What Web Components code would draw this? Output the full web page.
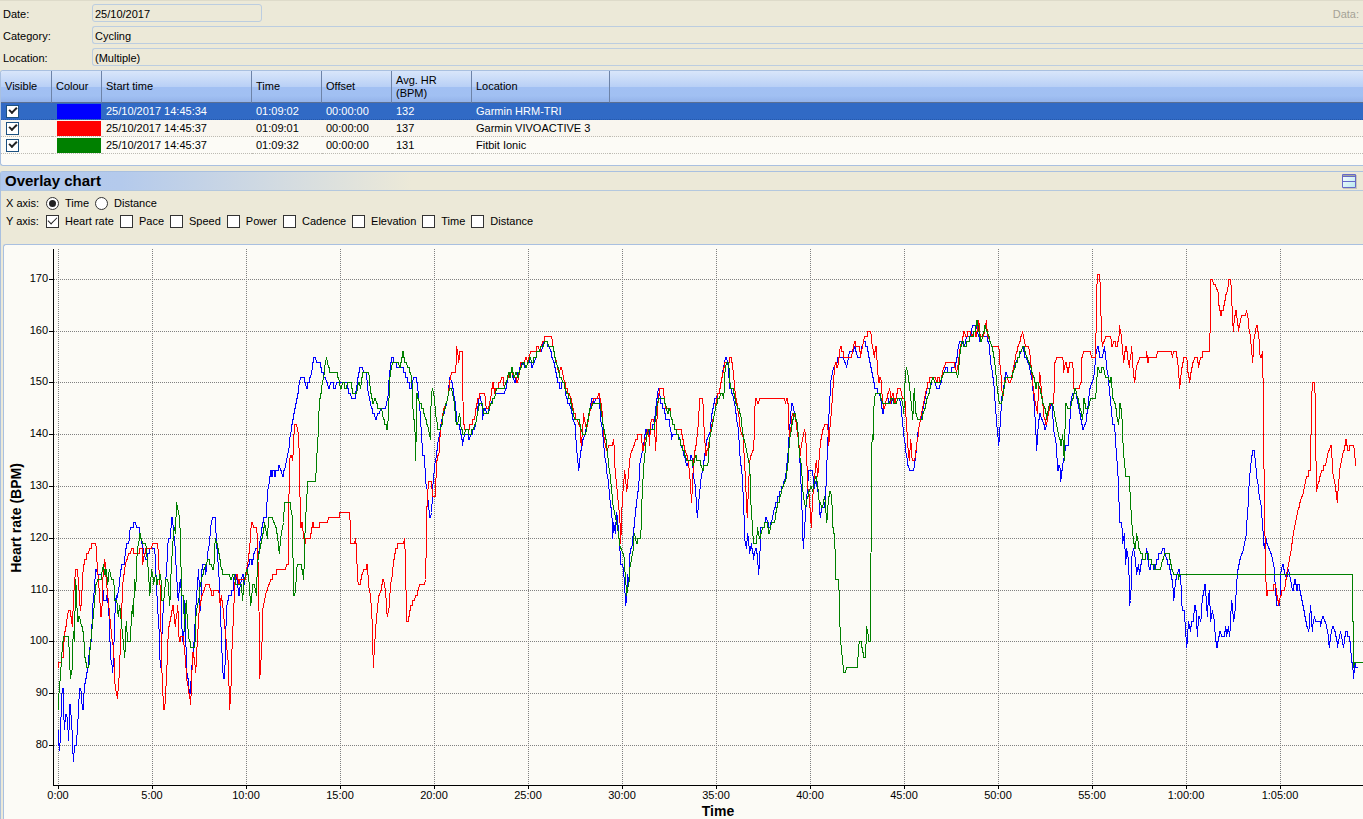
<!DOCTYPE html>
<html lang="en">
<head>
<meta charset="utf-8">
<title>Overlay chart</title>
<style>
html, body { margin: 0; height: 100%; }
body { background: #ece9d8; color: #000; font: 11px/14px "Liberation Sans", Arial, sans-serif; overflow: hidden; }
</style>
</head>
<body>
<activity-page></activity-page>

<script>
const define = (name, html, init) => customElements.define(name, class extends HTMLElement {
  connectedCallback() {
    if (this.shadowRoot) return;
    const t = document.createElement('template');
    t.innerHTML = html;
    this.attachShadow({ mode: 'open' }).append(t.content.cloneNode(true));
    if (init) init.call(this, this.shadowRoot);
  }
});

/* Labelled read-only field */
define('detail-field', `
<style>
:host { display: flex; align-items: center; height: 18px; padding-left: 3px; }
label { width: 89px; flex: none; padding-top: 2px; }
input { box-sizing: border-box; height: 18px; min-width: 0; flex: 1; margin: 0; padding: 2px 2px 0; border: 1px solid #bccde0; border-right: 0; border-radius: 3px 0 0 3px; background: transparent; font: inherit; color: inherit; outline: 0; }
:host([short]) input { flex: 0 0 170px; border-right: 1px solid #bccde0; border-radius: 3px; }
slot { display: block; margin-left: auto; padding-top: 2px; color: #a5a296; }
</style>
<label for="f"></label><input id="f" readonly><slot></slot>`, function (r) {
  r.querySelector('label').textContent = this.getAttribute('label');
  r.querySelector('input').value = this.getAttribute('value');
});

/* Radio button or tick box with its caption */
define('axis-option', `
<style>
:host { display: block; }
label { display: flex; align-items: center; gap: 6px; }
input { appearance: none; box-sizing: border-box; width: 13px; height: 13px; margin: 0; border: 1px solid #333; background: #fff; position: relative; flex: none; }
input[type=radio] { border-radius: 50%; display: grid; place-items: center; }
input[type=radio]:checked::before { content: ""; width: 7px; height: 7px; border-radius: 50%; background: #222; }
input[type=checkbox]:checked::before { content: ""; position: absolute; left: 1px; top: 1px; width: 8px; height: 4px; border: solid #222; border-width: 0 0 1px 1px; transform: rotate(-45deg); }
</style>
<label><input><slot></slot></label>`, function (r) {
  const i = r.querySelector('input');
  i.type = this.getAttribute('type') || 'checkbox';
  i.checked = this.hasAttribute('checked');
});

define('activity-table', `
<style>
:host { display: block; border: 1px solid #a9c0e0; border-right: 0; border-radius: 3px 0 0 3px; background: #fcfbf6; padding-bottom: 11px; overflow: hidden; }
table { width: 100%; border-collapse: separate; border-spacing: 0; table-layout: fixed; }
th, td { box-sizing: border-box; padding: 0 4px; text-align: left; font-weight: normal; white-space: nowrap; }
th { height: 32px; line-height: 13px; border-right: 1px solid #6d83a8; border-bottom: 1px solid #5b6f92; background: linear-gradient(#d9e6fa, #b9d0f6 50%, #a2c0f3 51%, #a1c0f2 80%, #94b3ea); }
th:last-child { border-right: 0; }
td { height: 17px; line-height: 16px; border-bottom: 1px dotted #bdbbb3; }
td:first-child { padding-left: 5px; }
tr.first td { background: #316ac5; color: #fff; border-bottom-color: #2458ac; }
tr.second td { background: #f9f6ef; }
i { display: block; height: 15px; margin: 0 -3px 0 1px; }
input { appearance: none; box-sizing: border-box; display: block; width: 13px; height: 13px; margin: 0; border: 1px solid #1c5180; background: #fff; position: relative; }
input:checked::before { content: ""; position: absolute; left: 2px; top: 1px; width: 6px; height: 3px; border: solid #222; border-width: 0 0 2px 2px; transform: rotate(-45deg); }
</style>
<table>
<colgroup><col style="width:51px"><col style="width:50px"><col style="width:150px"><col style="width:70px"><col style="width:70px"><col style="width:80px"><col style="width:138px"><col></colgroup>
<thead><tr><th>Visible</th><th>Colour</th><th>Start time</th><th>Time</th><th>Offset</th><th>Avg. HR<br>(BPM)</th><th>Location</th><th></th></tr></thead>
<tbody></tbody>
</table>`, r => {
  const rows = [
    ['first', '#00f', '25/10/2017 14:45:34', '01:09:02', '132', 'Garmin HRM-TRI'],
    ['second', '#f00', '25/10/2017 14:45:37', '01:09:01', '137', 'Garmin VIVOACTIVE 3'],
    ['third', '#008000', '25/10/2017 14:45:37', '01:09:32', '131', 'Fitbit Ionic']];
  r.querySelector('tbody').innerHTML = rows.map(([c, col, s, t, hr, l]) =>
    `<tr class="${c}"><td><input type="checkbox" checked aria-label="Show ${l}"></td><td><i style="background:${col}"></i></td><td>${s}</td><td>${t}</td><td>00:00:00</td><td>${hr}</td><td>${l}</td><td></td></tr>`).join('');
});

/* Heart rate traces: "x,bpm" pairs, 94 x units to five minutes */
const BLUE = `0,83 1,79 2,81 3,87 4,91 5,91 6,83 7.5,86 8.5,86 10.5,81 11.5,88 12,88 14,82 15,77 16.5,80 18,80 19.5,84 21,90 22,91 23,90 24,87 25,87 26,91 28,93 30,95 31,98 33,100 34.5,107 36,110 37.5,114 38.5,114 39,113 42.5,113 44,112 45.5,108 48,108 49,109 50.5,106 51.5,101 52.5,97 54.5,94 55.5,98 56.5,105 58,109 58.5,108 60.5,110 62,113 64,115 66,115 67,117 68.5,119 70.5,119 72,122 75,122 75.5,123 77.5,123 78,122 81,122 81.5,120 83,120 84.5,118 87.5,116 88.5,116 92,118 96.5,118 97.5,114 99.5,106 100.5,104 102,95 103,97 104,103 106,109 107.5,112 109,116 110,120 112,120 113.5,124 114,124 115.5,121 117,118 118.5,112 120,108 122,112 123,110 124,100 125.5,100 126.5,108 127.5,100 129,93 130.5,93 131,89 132,90 133.5,95 134.5,97 135.5,99 137.5,106 139.5,112 140.5,114 141.5,106 142.5,106 143.5,114 145,115 147,115 147.5,113 149,116 151,119 153,123 155,124 157,124 158,120 159.5,116 161,112 162,107 163.5,99 165,93 166.5,93 167.5,102 169,108 172,109 175,110 176,113 179,112 180.5,109 181,109 183,112 185,113 186,111 187,112 189,114 192,116 194,115 196,117 198,118 200.5,117 201,118 203,121 205,123 206,124 208,124 209,128 211,131 212.5,133 214,132 215,133 217,132 218,133 220,133 221,134 222,133 225,132 226,133 228.5,135 231,138 233,141 235,143 237.5,146 240,148 242,151 245.5,151 246.5,150 248.5,149 250,150 252.5,151 254,153 256,155 257.5,155 258,154 261.5,154 263.5,152 266.5,151 268.5,150 271,149 273,150 277,149 279,150 289,150 290.5,148 294.5,147 297,147 299,150 300.5,152 302.5,153 304,153 305.5,152 308,152 310,148 313,145 315.5,144 318,143 320,144 323.5,145 327.5,145 329.5,147 331,151 332.5,154 334.5,155 336,154 340,153 344,153 346.5,152 350,150 352.5,149 355.5,151 358,151 359.5,149 361.5,145 363,141 364.5,136 366,136 367.5,131 369.5,128 371,124.5 372,124 373.5,125 374.5,130 376.5,134 379.5,138 382,141 384,143 387,145 389.5,147 391.5,151 393.5,150 395.5,148 397.5,145 398.5,142 400.5,142 402.5,140 404.5,138 406.5,140 409.5,140 411,139 412.5,140 416,141 418.5,143 420,146 421.5,148 424,145 424.5,143 426,145 429.5,144 432,146 435.5,147 438,148 445.5,148 448,149 449.5,151 453.5,152 456.5,150 458.5,151 460.5,152 462,153 463.5,154 468,153 470.5,155 474,153 476,154 479,156 483,156 485.5,158 488,158 490.5,157 492.5,156 495.5,154 497.5,152 499.5,150 502.5,149 504.5,150 506,150 508,147 510.5,146 512.5,145 514.5,143 517,142 518,138 519.5,135 520.5,133 522,136 524.5,139 527,140 529.5,143 532,145 534,147 536,146 538,147 541,147 542.5,143 544.5,140 546.5,136 548.5,133 550.5,130 552,127 553.5,125 554.5,120 555.5,123 557,121 558.5,125 559.5,123 561.5,118 562.5,115 564.5,115 566,112 567.5,107 568.5,109 569.5,113 570.5,111 571.5,117 573.5,118 574.5,120 576.5,123 577,125 578.5,127 580.5,130 581.5,134 583.5,136 585.5,138 587.5,141 590,140 592.5,141 596,142 597.5,145 599.5,148 600.5,149 602.5,146 605.5,145 607.5,143 611,143 613.5,139 614.5,140 620,140 623,138 626,136 628.5,134 631.5,135 633.5,136 635.5,132 637,130 639,124 640.5,127 642.5,131 644.5,133 646.5,136 648.5,139 651.5,140 653,143 655.5,146 657,147 661,148 663,150 664.5,152 666,154 667.5,155 669.5,154 671.5,149 674.5,148 677,145 678.5,143 680.5,140 682,135 684,132 685.5,126 686.5,120 688,118 689.5,121 691.5,117 693,119 695.5,116 697,118 699,117 700.5,113 701.5,116 702.5,122 705.5,122 708,124 711,122 713.5,123 716,126 720.5,128 724.5,130 727.5,132 729.5,136 731.5,141 732.5,144 733.5,146 735.5,145 737,143 738.5,143 740.5,138 742,134 743.5,127 745,118 746.5,122 748,127 749.5,130 750.5,133 754.5,133 755.5,129 757.5,131 760.5,128 762,124 763.5,126 766,126 767.5,128 768,132 769.5,138 770.5,143 771.5,147 773,151 775.5,153 778.5,154 780.5,155 785,155 788.5,153 791.5,156 795,156 796.5,157 799.5,155 802,155 803.5,157 806,158 808.5,157 812,154 814.5,151 817,149 821.5,148 824.5,144 826.5,145 828.5,147 832,146 835.5,147 841,147 843,145 845.5,140 847.5,137 849.5,134 851.5,133 855.5,133 857.5,136 859.5,140 862.5,143 866,146 868.5,149 872,149 874.5,151 878.5,149 881,149 882.5,150 885.5,152 888.5,153 890,152 897,153 899.5,156 901.5,158 903.5,158 906,157 908.5,159 912,159 914.5,161 918,161 920,159 922.5,158 925.5,159 927.5,159 930.5,158 932.5,154 935.5,150 937,146 938.5,142 940.5,138 942,142 943.5,147 945.5,149 947.5,152 949.5,151 953.5,151 957,154 961,155 964.5,157 967,155 970.5,154 972,152 974,150 976,146 977.5,141 978.5,137 980,142 982,144 985.5,142 987,141 988.5,142 991,145 993.5,146 995.5,141 998,138 999.5,133 1001.5,134 1002.5,131 1004.5,134 1006,136 1007.5,138 1010,138 1011.5,142 1012.5,146 1014.5,148 1017.5,148 1019.5,146 1022,144 1024.5,141 1027.5,142 1029.5,145 1031.5,149 1034.5,150 1036,152 1037.5,155 1039.5,157 1041.5,155 1044.5,155 1046,157 1048,154 1050.5,150 1052.5,146 1054.5,142 1056,142 1058,137 1060,131 1061.5,123 1063.5,123 1064.5,119 1066,121 1067.5,115 1068.5,118 1070.5,115 1071.5,107 1072.5,108 1073.5,116 1075.5,118 1077,116 1078.5,113 1080,115 1081.5,113 1083.5,116 1087,116 1088.5,118 1091,114 1093.5,115 1097,114 1098.5,116 1102,117 1105.5,118 1108.5,116 1112,114 1114.5,111 1115.5,108 1117.5,112 1120.5,114 1122.5,112 1124,106 1126,106 1127,103 1128.5,99 1130.5,104 1132,102 1133.5,104 1135,104 1136.5,107 1138,106 1139,101 1140.5,105 1142.5,104 1144.5,109 1147,111 1149,105 1151,110 1152.5,104 1154,106 1156,104 1157.5,100 1158.5,99 1160,100 1162,102 1163.5,101 1166,101 1167.5,103 1168.5,101 1170,103 1171.5,101 1172.5,105 1173.5,108 1175.5,104 1176.5,105 1178,110 1179.5,114 1182,116 1185.5,118 1187.5,120 1189.5,125 1191,131 1192.5,134 1194.5,137 1196,137 1198,133 1200.5,129 1203,126 1204.5,122 1206,118 1207.5,120 1210.5,118 1213,117 1215.5,115 1217,111 1218.5,107 1221.5,107 1222.5,113 1224.5,115 1226.5,113 1228.5,112 1230.5,114 1232,112 1234.5,110 1237,112 1238.5,110 1240.5,111 1242.5,109 1244.5,107 1246.5,105 1248.5,103 1250.5,102 1252.5,107 1254,102 1256,105 1257.5,104 1261.5,104 1262.5,103 1264.5,105 1267,104 1269.5,102 1271,99 1272.5,101 1274.5,103 1277,102 1279.5,99 1282,102 1285.5,99 1287.5,102 1290.5,101 1292,100 1293.5,96 1294.5,95 1295.5,93 1296.5,96 1297.5,95 1299,95`;
const RED = `0,95 0.5,96 3,96 4,97 5,97 6,101 8,103 10,106 12,106 14,103 15,107 16,111 17.5,114 19,114 20.5,111 22,106 23,107 24.5,113 26.5,116 30,117 32,118 34.5,119 37.5,119 38.5,116 40.5,111 42.5,105 43.5,105 44.5,112 46.5,116 47.5,113 49.5,109 51.5,105 53.5,101 55.5,98 57,91 59,89 60.5,92 61.5,96 63,104 64.5,111 66.5,114 68.5,116 71.5,117 74.5,118 75.5,117 80.5,117 82,118 84,118 84.5,115 86,117 88.5,118 93,118 94.5,119 99.5,119 100.5,115 102,110 102.5,104 104,92 105.5,87 106.5,87 108.5,94 110,102 112,104 114.5,107 115.5,106 117,103 119.5,107 121,100 123.5,101 125,101 126.5,98 128.5,93 130.5,90 132.5,88 133.5,93 134.5,98 136.5,96 137.5,94 139,100 141,106 143.5,109 146,110 148,111 151,111 152,110 154.5,109 156.5,110 160.5,110 162,107 163,109 164.5,107 166.5,103 168.5,99 170,96 171.5,87 172.5,90 174,100 175.5,106 176.5,111 178.5,113 180.5,111 182,112 187,112 188.5,114 191.5,118 193,123 194,123 195.5,122 198.5,122 199.5,117 200.5,110 201.5,93 203.5,98 204.5,106 207,109 210.5,111 215.5,113 221.5,114 227,114 228.5,115 230,115 230.5,126 231.5,135 232.5,136 234.5,135 235.5,139 236.5,142 238,142 239,141 240.5,140 241.5,130 242.5,122 244,123 245,121 246.5,119 248.5,120 252,120 254.5,123 256,122 261,122 261.5,123 269.5,123 270.5,124 281,124 281.5,125 291.5,125 292.5,119 296.5,119 297,120 298.5,118 299,112 300.5,111 302,111 304,113 306,114 307.5,114 309,115 310.5,111 312.5,108 314,104 315,95 316.5,100 318,104 320.5,109 323,110 325,112 327,110 329,105 330.5,106 332,110 334.5,114 336.5,117 340.5,119 345.5,119 346.5,120 347.5,112 348.5,104 350,104 351.5,106 355.5,108 358.5,109 361.5,111 366.5,111 367.5,112 368,120 369,128 370.5,131 372.5,131 373.5,130 374.5,128 377.5,128 378,135 380.5,136 382.5,141 385.5,145 388.5,146 391.5,150 392.5,151 393.5,152 397.5,152 398.5,157 400.5,154 401.5,156 404,156 405,143 406.5,141 410.5,141 412,142 416.5,143 418.5,146 422,148 426.5,148 428,145 430.5,145 432.5,147 434.5,150 436.5,148 438.5,149 442,150 443.5,151 445,151 446,149 449.5,151 452.5,152 457,151 459.5,150 461.5,152 462.5,154 466,154 468,155 469.5,154 472.5,156 477,156 480,157 481.5,156 484.5,158 488,159 493.5,159 494.5,157 497,155 500.5,152 503.5,153 506,150 510.5,148 513,147 514.5,145 518,143 521.5,142 523,138 524.5,141 525.5,144 528,141 530.5,143 532.5,145 535.5,147 539.5,147 540.5,148 542,147 543.5,145 545.5,140 548,137 549.5,137 550.5,138 554.5,138 555.5,139 556.5,134 558,131 560,127 561.5,124 562.5,119 563.5,125 565.5,131 566.5,133 568.5,129 570,132 572,136 575.5,138 580.5,140 583,140 584.5,137 587,139 589.5,141 591.5,138 592,142 593.5,143 595.5,143 597.5,137 598.5,142 600,147 601.5,149 605.5,149 606,146 608.5,145 612,145 613,143 617,141 623,141 625.5,138 628.5,136 630.5,134 633.5,127 634.5,132 636,136 638.5,139 640,142 641.5,147 644.5,147 645.5,142 647.5,136 649.5,137 651.5,139 653.5,142 656.5,144 658.5,147 662,149 664.5,152 667,154 670.5,154 672,155 674,154 675.5,151 677.5,147 679.5,145 681.5,142 683,140 684.5,140 686,136 687.5,130 689,124 690.5,131 692,136 695.5,137 696.5,145 697.5,147 700,146 701.5,147 725.5,147 727.5,146 728.5,147 730,146 731,139 732.5,141 734,144 736,144 738,142 740,139 742,136 744,139 746.5,141 748,138 749.5,130 751.5,127 753,122 754.5,128 756.5,132 758,135 759.5,132 762,138 764.5,141 767.5,142 769.5,142 770.5,138 772,142 773.5,145 775.5,151 777,154 779.5,153 782,157 784.5,156 786,155 793.5,155 796.5,158 798,157 801,157 802.5,155 806,159 808.5,159 810.5,160 812.5,160 814,157 816,155 818,157 819.5,152 820.5,150 822.5,151 824.5,146 826,145 828.5,147 831.5,149 832.5,146 834.5,148 837,146 839.5,149 842.5,149 844,147 846.5,147 848,143 849.5,138 851,135 852.5,139 854,135 856.5,135 858.5,138 862,143 864.5,145 868.5,149 872.5,151 877,151 878.5,150 880.5,151 882,150 885.5,153 888.5,154 895.5,154 897,153 898.5,152 901.5,156 903.5,158 906,160 907.5,159 911.5,160 913.5,159 916.5,160 918,159 920.5,162 922,159 925.5,159 928,162 929.5,159 933.5,157 940.5,157 942,153 944.5,147 947,151 952.5,150 954.5,152 957,155 958.5,156 961.5,158 964.5,160 967,157 970.5,157 972,155 974.5,150 977,146 979,144 980.5,149 981.5,152 983.5,148 986,143 988,142 990.5,144 992.5,146 995.5,146 996.5,154 999,155 1004.5,155 1005.5,152 1007.5,154 1009.5,152 1012,154 1014.5,154 1015.5,149 1020.5,149 1023,150 1023.5,155 1026.5,156 1032,156 1033.5,155 1037,155 1038,161 1038.5,168 1039.5,171 1041.5,171 1042.5,164 1044,157 1046,158 1047.5,159 1052.5,159 1053.5,157 1056,158 1058,157 1060.5,158 1061.5,161 1063.5,158 1065.5,154 1067.5,157 1069.5,155 1071,153 1073.5,157 1075,152 1076.5,150 1078,153 1081.5,155 1088,155 1088.5,156 1089.5,154 1091.5,155 1098.5,155 1099.5,156 1112.5,156 1114.5,155 1115.5,156 1117.5,156 1119.5,154 1121.5,149 1123.5,153 1126,155 1128.5,155 1129.5,152 1131.5,150 1133.5,153 1136.5,155 1139,155 1140.5,153 1142.5,155 1146.5,156 1151.5,156 1152,163 1152.5,170 1154.5,170 1155,169 1157.5,169 1158,168 1159.5,168 1160.5,165 1162.5,163 1166,165 1168,167 1169.5,168 1170.5,170 1172.5,170 1173.5,166 1175,160 1176.5,163 1178,164 1179.5,161 1180.5,160 1183.5,163 1187.5,163 1188.5,164 1190.5,161 1192.5,158 1194.5,154 1195.5,158 1198.5,161 1200.5,159 1202,155 1203.5,155 1204.5,156 1205,146 1206,129 1207.5,112 1208.5,109 1210.5,110 1214.5,110 1216,111 1217.5,111 1218.5,109 1220.5,107 1222,109 1224.5,110 1226.5,110 1228.5,113 1231.5,116 1234.5,120 1237.5,123 1240.5,126 1245.5,129 1248.5,132 1252,133 1253,142 1253.5,148 1254.5,150 1256.5,150 1257.5,141 1257.7,129 1258.5,129 1260.5,131 1263.5,133 1267,134 1270.5,137 1273,138 1274.5,133 1277,130 1279,127 1281,132 1283,135 1285.5,137 1288,139 1289.5,137 1293,138 1295.5,138 1296.5,136 1297.5,134`;
const GREEN = `0,87 1,91 2.5,94 4,99 5.5,101 9.5,101 10.5,100 11.5,95 12.5,93 14,95 15,102 16,100 17.5,112 18.5,107 19.5,104 21,105 23.5,103 25.5,101 26.5,97 28.5,95 30.5,95 32,99 33.5,102 36,107 37.5,111 40.5,112 43,112 45,115 46.5,113 48,114 49.5,111 51,114 53,112 55.5,112 56.5,108 58.5,108 60,105 61.5,107 63.5,103 66.5,97 68,104 69.5,100 72,100 74,107 75,105 76.5,112 77.5,110 78.5,116 81.5,121 83,120 84.5,119 87.5,119 89.5,115 91.5,109 93.5,114 95.5,111 97.5,113 98.5,111 102.5,113 103.5,108 105.5,108 107.5,112 109.5,112 111.5,107 113,114 114.5,119 116,122 117,121 118.5,127 120,125 121.5,124 122.5,116 123.5,109 125.5,109 126,102 128,108 129.5,103 131,100 133,99 136.5,99 138,106 140.5,108 142,111 144.5,113 147.5,115 150,116 152,115 155.5,114 157,120 158.5,119 160.5,117 162,116 163,114 165.5,113 170.5,113 172.5,112 175.5,113 177.5,111 183,111 184.5,108 185.5,111 188.5,114 190.5,112 192.5,107 194.5,111 196.5,111 198,109 199.5,116 202,118 204,120 206.5,123 209,120 210.5,124 214,124 215.5,123 217.5,122 219,121 221,117 222.5,120 225.5,123 226,127 232,127 233,125 234.5,124 234.7,109 236.5,109 238,112 238.7,115 243,115 245.5,112 246.5,120 248,126 249.5,131 257.5,131 258.5,136 260,140 261,146 263.5,149 266,152 268,155 270,153 272,152 278,152 280,151 282.5,149 285.5,150 287,149 290.5,150 292.5,150 294.5,148 298,148 300.5,150 302.5,149 304.5,152 310.5,152 312,149 314.5,146 317,147 320,145 323.5,145 325,143 329.5,141 330.5,146 332,152 334.5,154 339.5,154 342,153 344.5,156 346.5,154 350.5,153 353.5,151 355,144 356.5,142 357.5,135 358.5,148 361.5,146 364.5,145 367.5,143 370.5,141 372,139 372.5,145 374,149 376,147 377.5,144 379.5,141 381.5,141 384,142 386,145 388.5,146 391.5,149 392.5,149 394.5,148 396.5,145 398,142 399.5,142 401.5,144 403,141 405.5,140 408,141 412,140 414.5,141 417.5,142 419.5,144 421.5,146 423.5,146 425.5,144 430.5,144 432.5,146 436,147 438.5,149 445.5,149 448.5,150 450,152 452,151 453.5,153 455.5,151 458,152 459.5,151 462.5,153 465.5,154 468,153 471.5,155 473.5,154 477,155 479.5,156 484,157 488,158 491.5,157 494.5,157 496.5,155 499.5,153 501.5,151 505.5,150 508.5,148 511.5,147 514,145 516.5,143 520.5,143 522.5,141 524.5,140 527.5,140 529.5,143 532,145 535.5,146 542,146 544.5,142 547,140 548.5,138 550.5,134 552.5,131 554.5,127 557,124 559.5,122 562,118 565.5,117 567,113 568.5,109 570.5,111 572,115 574.5,117 576,121 578.5,119 580.5,120 582.5,120 583.5,126 584.5,131 586.5,136 588.5,140 591,141 596,141 598,144 600,147 605.5,147 607,146 609.5,144 611,145 613,143 617,141 621,139 625.5,137 628.5,135 632.5,135 635.5,134 637.5,136 638.5,135 641.5,135 644.5,133 646,134 649.5,134 651,138 653,141 655.5,143 658.5,146 660,147 663.5,148 665.5,147 667,153 668.5,154 670.5,154 672,149 674.5,149 676.5,147 679.5,145 682.5,144 684.5,140 687.5,138 690,135 691.5,134 692.5,127 694.5,121 695.5,119 698.5,119 699,122 701.5,120 704.5,122 708.5,123 711,121 713.5,123 716.5,123 718.5,126 722,128 724.5,130 727.5,131 729.5,134 731,138 733.5,142 736,144 738.5,143 741.5,136 743.5,133 745,128 747,126 749.5,128 752.5,130 754.5,129 757.5,132 759.5,130 761,127 764.5,126 766.5,128 768.5,123 770,127 771.5,129 773.5,128 774.5,122 776.5,120 777.5,112 780.5,112 781.5,104 782.5,100 784,97 785.5,94 787.5,94 788.5,95 799.5,95 799.7,99 801.5,100 803,100 804.5,98 805.5,97 807,97 808,100 808.5,103 810.5,100 812,100 812.3,106 813,123 813.5,138 814.5,140 815,139 815.5,145 817,148 821.5,148 824.5,146 830.5,146 833.5,147 837,146 840.5,147 843.5,147 845.5,144 847,151 848,153 850,151 852,148 854.5,143 856,149 857.5,144 859.5,143 863.5,143 866.5,145 870.5,148 874.5,151 877,150 882,150 885.5,152 898,152 899.5,151 901.5,155 903.5,158 907,157 909.5,158 913.5,159 917,160 918.5,162 920.5,160 923,158 925.5,160 927,161 928.5,160 930.5,159 933.5,157 936.5,154 938.5,150 941,146 943.5,146 945.5,149 948,151 953.5,151 956.5,153 962,156 965.5,157 968.5,155 972.5,153 975.5,151 977.5,149 979.5,150 982,149 984.5,146 986.5,145 988.5,143 991,146 994,146 996,144 998.5,142 1001,139 1003,138 1004.5,140 1006,135 1007,143 1007.5,146 1009.5,145 1012.5,145 1014.5,147 1017,149 1019.5,147 1022,145 1024.5,143 1025.5,147 1027.5,145 1030.5,145 1032.5,147 1037.5,147 1038.5,150 1039.5,153 1042,152 1045,153 1047,151 1049.5,151 1051.5,150 1053,151 1054.5,147 1057,146 1059,143 1060.5,142 1061.5,146 1063.5,144 1064.5,139 1066,135 1067.5,132 1071,132 1072,128 1073.5,123 1075.5,119 1077,118 1078.5,121 1080.5,118 1082.5,117 1086,116 1088.5,117 1091.5,116 1094.5,115 1098,114 1102.5,114 1104.5,116 1107,117 1110.5,117 1112.5,115 1115.5,113 1119.5,113 1120.5,112 1121.5,113 1294.5,113 1294.8,95 1295.5,95 1296,96 1305,96`;

/* Heart rate chart, redrawn to the size of its box */
define('rate-chart', `
<style>
:host { display: block; flex: 1; min-height: 300px; overflow: hidden; border: solid #a9c0e0; border-width: 1px 0 0 1px; border-radius: 3px 0 0 0; background: #fcfbf6; }
svg { display: block; width: 100%; height: 100%; }
text { font: 11px "Liberation Sans", Arial, sans-serif; }
.title { font-size: 14px; font-weight: bold; text-anchor: middle; }
.grid { stroke: #808080; stroke-dasharray: 1 1; fill: none; shape-rendering: crispEdges; }
.axis { stroke: #000; fill: none; shape-rendering: crispEdges; }
.trace { fill: none; stroke-width: 1; stroke-linejoin: bevel; shape-rendering: crispEdges; }
</style>
<svg role="img" aria-label="Heart rate over time"></svg>`, function (r) {
  const svg = r.querySelector('svg');
  const series = [[BLUE, '#00f'], [RED, '#f00'], [GREEN, '#008000']]
    .map(([d, c]) => [d.split(' ').map(p => p.split(',').map(Number)), c]);
  const draw = () => {
    const w = svg.clientWidth, h = svg.clientHeight;
    const left = 49, base = h - 34;
    const kx = (w - 54) / 1305, ky = (base - 4) / 536;
    const X = u => Math.round(left + 5 + u * kx) + .5;
    const Y = v => Math.round(base - (40 + (v - 80) * 5.18) * ky) + .5;
    let grid = '', axis = `M${left + .5} 4V${base + .5}H${w}`, labels = '';
    for (let v = 80; v <= 170; v += 10) {
      grid += `M${left + 1} ${Y(v)}H${w}`;
      axis += `M${left - 4} ${Y(v)}H${left}`;
      labels += `<text x="44" y="${Y(v) + 2.5}" text-anchor="end">${v}</text>`;
    }
    for (let i = 0; i <= 13; i++) {
      const x = X(i * 94), m = i * 5;
      grid += `M${x} 4V${base}`;
      axis += `M${x} ${base}V${base + 4}`;
      const t = m < 60 ? m + ':00' : '1:' + String(m - 60).padStart(2, '0') + ':00';
      labels += `<text x="${x - .5}" y="${base + 14}" text-anchor="middle">${t}</text>`;
    }
    const traces = series.map(([pts, c]) => {
      let d = '', k = 0;
      const end = pts[pts.length - 1][0];
      for (let u = 0; u <= end; u += .5) {
        while (k < pts.length - 2 && pts[k + 1][0] < u) k++;
        const [x0, v0] = pts[k], [x1, v1] = pts[k + 1];
        const v = Math.round(v0 + (v1 - v0) * Math.min(1, (u - x0) / (x1 - x0)));
        d += (d ? 'L' : 'M') + (Math.floor(left + 5 + u * kx) + .5) + ' ' + Y(v);
      }
      return `<path class="trace" stroke="${c}" d="${d}"/>`;
    }).join('');
    svg.innerHTML = `<path class="grid" d="${grid}"/>${traces}<path class="axis" d="${axis}"/>${labels}
      <text class="title" x="${Math.round((left + w) / 2) + 10}" y="${base + 31}">Time</text>
      <text class="title" transform="translate(17 ${Math.round(base / 2) + 3}) rotate(-90)">Heart rate (BPM)</text>`;
  };
  draw();
  addEventListener('resize', draw);
});

define('overlay-panel', `
<style>
:host { display: flex; flex-direction: column; flex: 1; border: solid #a9c0e0; border-width: 1px 0 0 1px; border-radius: 3px 0 0 0; }
header { display: flex; align-items: center; justify-content: space-between; height: 18px; padding: 0 6px 0 4px; border-bottom: 1px solid #b4c8de; background: linear-gradient(90deg, #b1c8ee 0, #b4caec 120px, #ece9d8 410px); }
h2 { margin: 0; font-size: 15px; line-height: 20px; }
button { display: block; width: 15px; height: 15px; padding: 0; border: 0; background: none; }
svg { display: block; }
fieldset { display: flex; align-items: center; min-width: 0; height: 18px; margin: 0; padding: 0 0 0 5px; border: 0; gap: 6px; }
.lab { width: 34px; white-space: nowrap; }
.controls { padding-top: 3px; height: 50px; }
.plot { display: flex; flex: 1; padding-left: 2px; }
</style>
<header><h2>Overlay chart</h2>
<button aria-label="Split view"><svg width="15" height="15" viewBox="0 0 15 15"><defs><linearGradient id="g" x2="1" y2="1"><stop stop-color="#fff"/><stop offset="1" stop-color="#b5e8ee"/></linearGradient></defs><path fill="#c9c6b8" d="M1 1h14v14H1z"/><path fill="url(#g)" d="M0 0h14v14H0z"/><path fill="#a3a89d" d="M1 1h12v1H1z"/><path fill="none" stroke="#6668c8" d="M.5.5h13v13H.5zM1 2.5h12M1 7.5h12"/></svg></button></header>
<div class="controls">
<fieldset aria-label="X axis"><span class="lab">X axis:</span>
<axis-option type="radio" checked>Time</axis-option><axis-option type="radio">Distance</axis-option></fieldset>
<fieldset aria-label="Y axis"><span class="lab">Y axis:</span>
<axis-option checked>Heart rate</axis-option><axis-option>Pace</axis-option><axis-option>Speed</axis-option><axis-option>Power</axis-option><axis-option>Cadence</axis-option><axis-option>Elevation</axis-option><axis-option>Time</axis-option><axis-option>Distance</axis-option></fieldset>
</div>
<div class="plot"><rate-chart></rate-chart></div>`);

define('activity-page', `
<style>
:host { display: flex; flex-direction: column; box-sizing: border-box; min-height: 100vh; border-top: 1px solid #dedbca; }
.fields { display: flex; flex-direction: column; gap: 4px; padding: 3px 0 4px; }
overlay-panel { margin-top: 5px; }
</style>
<div class="fields">
<detail-field short label="Date:" value="25/10/2017"><span style="padding-right:4px">Data:</span></detail-field>
<detail-field label="Category:" value="Cycling"></detail-field>
<detail-field label="Location:" value="(Multiple)"></detail-field>
</div>
<activity-table></activity-table>
<overlay-panel></overlay-panel>`);
</script>
</body>
</html>
